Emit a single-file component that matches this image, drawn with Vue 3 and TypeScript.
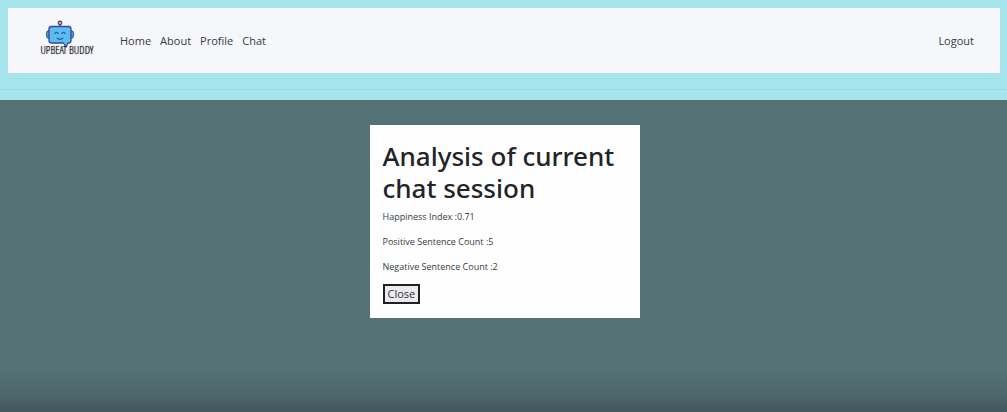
<script setup lang="ts">
interface NavLink {
  label: string
  href: string
}

interface Metric {
  label: string
  value: string
}

const links: NavLink[] = [
  { label: 'Home', href: '#home' },
  { label: 'About', href: '#about' },
  { label: 'Profile', href: '#profile' },
  { label: 'Chat', href: '#chat' },
]

const metrics: Metric[] = [
  { label: 'Happiness Index', value: '0.71' },
  { label: 'Positive Sentence Count', value: '5' },
  { label: 'Negative Sentence Count', value: '2' },
]
</script>

<template>
  <div class="page">
    <header class="top">
      <nav class="navbar">
        <a class="brand" href="#home">
          <svg class="robot" viewBox="0 0 28 28" aria-hidden="true">
            <rect x="0.600" y="11" width="5" height="7" rx="1.500" fill="#5a9fe0" stroke="#3c4398" />
            <rect x="22.400" y="11" width="5" height="7" rx="1.500" fill="#5a9fe0" stroke="#3c4398" />
            <path d="M14 4.500V7" stroke="#4b3f78" stroke-width="1.300" />
            <circle cx="14" cy="2.900" r="1.800" fill="#d7a3a6" stroke="#63435f" stroke-width="1.200" />
            <path
              d="M5.500 6.500H22.500Q25 6.500 25 9V20.500Q25 23 22.500 23H22L20 27L17.500 23H5.500Q3 23 3 20.500V9Q3 6.500 5.500 6.500Z"
              fill="#5bbcf0"
              stroke="#3c4398"
              stroke-width="1.300"
              stroke-linejoin="round"
            />
            <path
              d="M8.800 13.500Q10.500 11 12.200 13.500M15.800 13.500Q17.500 11 19.200 13.500M11.200 18.300Q14 20.300 16.800 18.300"
              fill="none"
              stroke="#294b94"
              stroke-width="1.200"
              stroke-linecap="round"
            />
          </svg>
          <span class="brand-name">UPBEAT BUDDY</span>
        </a>
        <ul class="links">
          <li v-for="link in links" :key="link.label">
            <a :href="link.href">{{ link.label }}</a>
          </li>
        </ul>
        <a class="logout" href="#logout">Logout</a>
      </nav>
    </header>
    <main class="stage">
      <section class="card" role="dialog" aria-labelledby="analysis-title">
        <h1 id="analysis-title">Analysis of current chat session</h1>
        <p v-for="metric in metrics" :key="metric.label">{{ metric.label }} :{{ metric.value }}</p>
        <button type="button">Close</button>
      </section>
    </main>
  </div>
</template>

<style>
body {
  margin: 0;
}
</style>

<style scoped>
.page {
  display: flex;
  flex-direction: column;
  min-height: 100vh;
  font-family: "Open Sans", "Noto Sans", sans-serif;
  font-size: 11px;
  line-height: 16px;
  color: #212529;
}

.top {
  padding: 8px 7px 10px 8px;
  background: linear-gradient(#98dbe1, #98dbe1) 0 89px / 100% 1px no-repeat #a6e5ec;
}

.navbar {
  display: flex;
  align-items: center;
  box-sizing: border-box;
  min-height: 65px;
  margin-bottom: 17px;
  padding: 0 26px 0 31px;
  background: #f5f7fa;
}

.navbar a {
  color: #383b3f;
  text-decoration: none;
}

.navbar .brand {
  display: flex;
  flex-direction: column;
  align-items: center;
  width: 56px;
  padding-bottom: 5px;
  color: #0c090e;
}

.robot {
  width: 28px;
  height: 28px;
  margin-right: 14px;
}

.brand-name {
  margin-top: -4px;
  font-family: "Open Sans Condensed Light", "Open Sans Condensed", "Liberation Sans Narrow", sans-serif;
  font-size: 11px;
  font-weight: 300;
  line-height: 12px;
  text-shadow: 0 0 1px #4a464d;
  white-space: nowrap;
}

.links {
  display: flex;
  gap: 9px;
  margin: 0 0 0 25px;
  padding: 0;
  list-style: none;
}

.logout {
  margin-left: auto;
}

.stage {
  flex: 1;
  padding: 25px 16px 25px 18px;
  background: linear-gradient(to top, #43565d, #4d666b 16px, #547175 40px);
}

.card {
  box-sizing: border-box;
  max-width: 270px;
  margin: 0 auto;
  padding: 15px 13px 14px;
  background: #fefefe;
}

h1 {
  margin: 0 0 5px;
  font-family: "Noto Sans", "Open Sans", sans-serif;
  font-size: 26px;
  font-weight: 500;
  line-height: 32px;
}

p {
  margin: 0 0 10px;
  font-size: 9px;
  line-height: 15px;
  color: #383c40;
}

button {
  display: block;
  padding: 0 3px;
  border: 2px solid #202124;
  border-radius: 0;
  background: #ececef;
  color: #303338;
  font: inherit;
}
</style>
